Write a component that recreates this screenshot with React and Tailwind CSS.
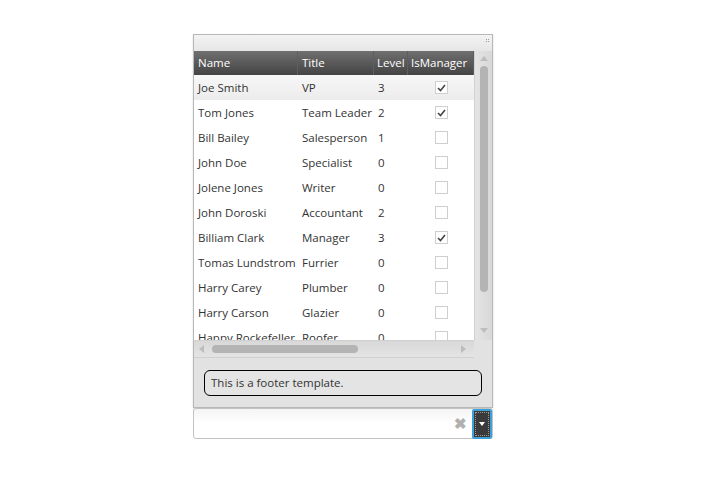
import { useState } from 'react'

const rows = [
  ['Joe Smith', 'VP', 3, true],
  ['Tom Jones', 'Team Leader', 2, true],
  ['Bill Bailey', 'Salesperson', 1, false],
  ['John Doe', 'Specialist', 0, false],
  ['Jolene Jones', 'Writer', 0, false],
  ['John Doroski', 'Accountant', 2, false],
  ['Billiam Clark', 'Manager', 3, true],
  ['Tomas Lundstrom', 'Furrier', 0, false],
  ['Harry Carey', 'Plumber', 0, false],
  ['Harry Carson', 'Glazier', 0, false],
  ['Happy Rockefeller', 'Roofer', 0, false],
]

function Check({ on }) {
  return (
    <div className="w-[13px] h-[13px] border border-[#cfcfcf] bg-white flex items-center justify-center">
      {on && (
        <svg width="9" height="8" viewBox="0 0 9 8">
          <path d="M1 4 L3.5 6.5 L8 1" fill="none" stroke="#444" strokeWidth="1.6" />
        </svg>
      )}
    </div>
  )
}

export default function App() {
  const [sel] = useState(0)
  return (
    <div className="min-h-screen bg-white pt-[34px] pl-[193px]" style={{ fontFamily: '"Open Sans", "Noto Sans", sans-serif' }}>
      <div className="w-[300px] border-t border-[#8a8a8a] border-l border-r border-[#b8b8b8] border-b bg-[#e2e2e2] shadow-[0_1px_2px_rgba(0,0,0,0.15)]">
        <div className="h-[16px] bg-gradient-to-b from-[#f3f3f3] to-[#e6e6e6] flex justify-end items-start pt-[4px] pr-[3px]">
          <div className="grid grid-cols-2 gap-[1px]">
            <span className="w-[1px] h-[1px] bg-[#9a9a9a]" />
            <span className="w-[1px] h-[1px] bg-[#9a9a9a]" />
            <span className="w-[1px] h-[1px] bg-[#9a9a9a]" />
            <span className="w-[1px] h-[1px] bg-[#9a9a9a]" />
          </div>
        </div>
        <div className="flex">
          <div className="w-[280px] flex flex-col">
            <div className="h-[24px] flex bg-gradient-to-b from-[#707070] to-[#444444] text-white text-[11.5px] leading-[24px] whitespace-nowrap">
              <div className="w-[104px] pl-[4px] border-r border-[#5e5e5e]">Name</div>
              <div className="w-[76px] pl-[4px] border-r border-[#5e5e5e]">Title</div>
              <div className="w-[34px] pl-[3px] border-r border-[#5e5e5e]">Level</div>
              <div className="w-[66px] pl-[3px] border-r border-[#5e5e5e]">IsManager</div>
            </div>
            <div className="h-[265px] overflow-hidden bg-white">
              {rows.map((r, i) => (
                <div
                  key={r[0]}
                  className={`h-[25px] flex items-center text-[11.5px] text-[#333] whitespace-nowrap ${i === sel ? 'bg-gradient-to-b from-[#f7f7f7] to-[#ececec]' : ''}`}
                >
                  <div className="w-[104px] pl-[4px] overflow-hidden">{r[0]}</div>
                  <div className="w-[76px] pl-[4px] overflow-hidden">{r[1]}</div>
                  <div className="w-[34px] pl-[4px]">{r[2]}</div>
                  <div className="w-[66px] flex justify-center">
                    <Check on={r[3]} />
                  </div>
                </div>
              ))}
            </div>
          </div>
          <div className="w-[18px] h-[289px] bg-gradient-to-r from-[#e4e4e4] to-[#d8d8d8] border-l border-[#d0d0d0] flex flex-col items-center">
            <div className="h-[15px] flex items-center justify-center">
              <div className="w-0 h-0 border-l-[4px] border-r-[4px] border-b-[5px] border-l-transparent border-r-transparent border-b-[#bdbdbd]" />
            </div>
            <div className="w-[8px] h-[226px] rounded-[4px] bg-[#b4b4b4]" />
            <div className="flex-1" />
            <div className="h-[20px] flex items-center justify-center">
              <div className="w-0 h-0 border-l-[4px] border-r-[4px] border-t-[5px] border-l-transparent border-r-transparent border-t-[#bdbdbd]" />
            </div>
          </div>
        </div>
        <div className="flex">
          <div className="w-[280px] h-[18px] bg-gradient-to-b from-[#d8d8d8] to-[#e4e4e4] border-t border-[#d0d0d0] border-b flex items-center px-[5px]">
            <div className="w-0 h-0 border-t-[4px] border-b-[4px] border-r-[5px] border-t-transparent border-b-transparent border-r-[#bdbdbd]" />
            <div className="ml-[8px] w-[146px] h-[8px] rounded-[4px] bg-[#b4b4b4]" />
            <div className="flex-1" />
            <div className="w-0 h-0 border-t-[4px] border-b-[4px] border-l-[5px] border-t-transparent border-b-transparent border-l-[#bdbdbd] mr-[3px]" />
          </div>
          <div className="flex-1 bg-[#e2e2e2]" />
        </div>
        <div className="h-[49px] px-[10px] pt-[12px]">
          <div className="h-[26px] border border-black rounded-[6px] bg-[#e4e4e4] pl-[6px] text-[11.5px] leading-[24px] text-[#333]">
            This is a footer template.
          </div>
        </div>
      </div>
      <div className="w-[300px] h-[31px] border border-[#c3c3c3] rounded-[3px] bg-gradient-to-b from-[#f4f4f4] via-white to-white flex items-center justify-end">
        <span className="text-[#b0b0b0] text-[15px] font-bold mr-[5px] leading-none">✖</span>
        <div className="w-[20px] h-[30px] bg-[#3a3a3a] border-2 border-[#3ba1d8] rounded-[2px] flex items-center justify-center">
          <div className="w-[14px] h-[24px] border border-dotted border-[#999] flex items-center justify-center">
            <div className="w-0 h-0 border-l-[3px] border-r-[3px] border-t-[4px] border-l-transparent border-r-transparent border-t-white" />
          </div>
        </div>
      </div>
    </div>
  )
}
